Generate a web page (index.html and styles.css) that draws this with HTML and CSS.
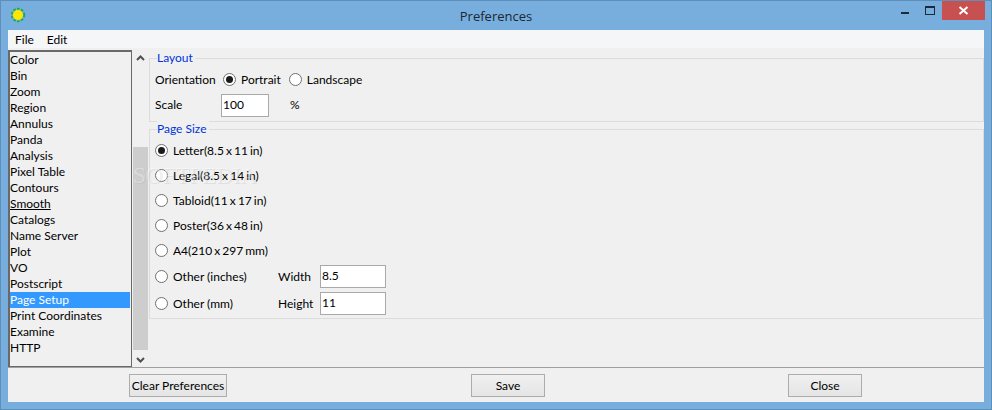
FILE: index.html
```html
<!DOCTYPE html>
<html lang="en">
<head>
<meta charset="utf-8">
<title>Preferences</title>
<link rel="stylesheet" href="styles.css">
</head>
<body>
<div class="window">
  <header class="titlebar">
    <svg class="app-icon" width="16" height="16" viewBox="0 0 16 16"><circle cx="8" cy="8" r="7.500" fill="#6fc09a"/><circle cx="8" cy="8" r="6.300" fill="none" stroke="#1f9a8a" stroke-width="1.800" stroke-dasharray="2.500 1.500"/><circle cx="8" cy="8" r="5" fill="#ffe600"/></svg>
    <div class="title">Preferences</div>
    <div class="controls">
      <div class="ctl"><span class="min"></span></div>
      <div class="ctl"><span class="max"></span></div>
      <div class="close"><svg width="11" height="9" viewBox="0 0 11 9"><path d="M1.500 1l8 7M9.500 1l-8 7" stroke="#fff" stroke-width="2" fill="none"/></svg></div>
    </div>
  </header>
  <div class="client">
    <nav class="menubar"><span>File</span><span>Edit</span></nav>
    <div class="main">
      <ul class="list">
        <li>Color</li><li>Bin</li><li>Zoom</li><li>Region</li><li>Annulus</li><li>Panda</li><li>Analysis</li><li>Pixel Table</li><li>Contours</li><li>Smooth</li><li>Catalogs</li><li>Name Server</li><li>Plot</li><li>VO</li><li>Postscript</li><li class="sel">Page Setup</li><li>Print Coordinates</li><li>Examine</li><li>HTTP</li>
      </ul>
      <div class="scrollbar">
        <svg width="9" height="6" viewBox="0 0 9 6"><path d="M1 5l3.500-3.500L8 5" stroke="#505050" stroke-width="2" fill="none"/></svg>
        <div class="track"><div class="thumb"></div></div>
        <svg width="9" height="6" viewBox="0 0 9 6"><path d="M1 1l3.500 3.500L8 1" stroke="#505050" stroke-width="2" fill="none"/></svg>
      </div>
      <div class="panel">
        <fieldset class="group layout">
          <legend>Layout</legend>
          <div class="row orient">
            <span class="lab-orient">Orientation</span>
            <span class="radio on"></span><span class="rlab">Portrait</span>
            <span class="radio"></span><span>Landscape</span>
          </div>
          <div class="row scale">
            <span class="lab-scale">Scale</span>
            <span class="input w48">100</span>
            <span class="pct">%</span>
          </div>
        </fieldset>
        <fieldset class="group size">
          <legend>Page Size</legend>
          <div class="row opt"><span class="radio on"></span><span>Letter(8.5 x 11 in)</span></div>
          <div class="row opt"><span class="radio"></span><span>Legal(8.5 x 14 in)</span></div>
          <div class="row opt"><span class="radio"></span><span>Tabloid(11 x 17 in)</span></div>
          <div class="row opt"><span class="radio"></span><span>Poster(36 x 48 in)</span></div>
          <div class="row opt"><span class="radio"></span><span>A4(210 x 297 mm)</span></div>
          <div class="row opt tall"><span class="radio"></span><span class="olab">Other (inches)</span><span class="dim">Width</span><span class="input w66">8.5</span></div>
          <div class="row opt tall"><span class="radio"></span><span class="olab">Other (mm)</span><span class="dim">Height</span><span class="input w66">11</span></div>
        </fieldset>
      </div>
      <div class="watermark">SOFTPEDIA</div>
    </div>
    <footer class="footer">
      <button class="btn wide">Clear Preferences</button>
      <button class="btn">Save</button>
      <button class="btn">Close</button>
    </footer>
  </div>
</div>
</body>
</html>
```
FILE: styles.css
```css
* { box-sizing: border-box; }
html, body { margin: 0; padding: 0; }
body {
  width: 992px; height: 410px; overflow: hidden;
  font: 12px/16px Lato, "Open Sans", sans-serif;
  color: #000;
}
.window {
  width: 992px; height: 410px;
  background: #78aedd;
  border: 1px solid #5f8fb8;
  padding: 0 7px 7px;
  display: flex; flex-direction: column;
}
.titlebar {
  height: 29px; flex: none;
  display: flex; align-items: center;
  position: relative;
}
.app-icon { margin: 0 0 1px 2px; }
.title {
  position: absolute; left: 0; right: 0; top: 6px;
  text-align: center; font: 13px/18px "Open Sans", sans-serif; color: #1b2733;
}
.controls { margin-left: auto; margin-right: -1px; height: 100%; display: flex; align-items: flex-start; }
.ctl { width: 25px; height: 19px; display: flex; justify-content: center; align-items: flex-start; }
.min { width: 8px; height: 2px; background: #1e2a36; margin-top: 11px; }
.max { width: 10px; height: 9px; border: 1px solid #1e2a36; border-top-width: 2px; margin-top: 5px; }
.close {
  width: 43px; height: 19px;
  background: #c75050;
  display: flex; align-items: center; justify-content: center;
}
.client {
  flex: 1; min-height: 0;
  background: #f0f0f0;
  display: flex; flex-direction: column;
}
.menubar {
  height: 18px; flex: none;
  background: #f5f6f7;
  padding-left: 7px;
  display: flex; gap: 13px;
  line-height: 19px;
}
.main {
  flex: none; height: 320px;
  display: flex; position: relative;
  border-bottom: 1px solid #a0a0a0;
  padding-top: 2px;
}
.list {
  list-style: none; margin: 0;
  width: 124px; height: 317px; flex: none;
  padding: 0 1px 0 0;
  border: 1px solid #696969; border-top-width: 2px; border-left-width: 2px;
  line-height: 16px; color: #000;
  background: #f0f0f0;
}
.list .sel { background: #3399ff; color: #fff; }
.list li:nth-child(10) { text-decoration: underline; text-decoration-thickness: 1px; }
.scrollbar {
  width: 17px; flex: none;
  padding-right: 1px;
  display: flex; flex-direction: column; align-items: center;
}
.scrollbar svg { flex: none; margin: 5px 0 0; }
.track { flex: none; width: 100%; height: 291px; padding-top: 86px; }
.thumb { width: 15px; margin-left: 1px; height: 203px; background: #cdcdcd; }
.panel { flex: 1; min-width: 0; display: flex; flex-direction: column; }
.group {
  margin: 0; padding: 0 0 0 5px;
  border: 1px solid #dcdcdc;
  min-width: 0;
}
.group legend {
  padding: 0 2px 0 0; margin-left: 2px;
  color: #0033dd; line-height: 16px;
  background: #f0f0f0;
}
.layout { height: 72px; }
.size { height: 198px; margin-top: -1px; }
.row { display: flex; align-items: center; }
.orient { height: 25px; margin-top: 1px; }
.lab-orient { width: 68px; }
.radio {
  width: 13px; height: 13px; flex: none;
  border: 1px solid #707070; border-radius: 50%;
  background: #fff; position: relative;
}
.radio.on::after {
  content: ""; position: absolute; left: 2px; top: 2px;
  width: 7px; height: 7px; border-radius: 50%; background: #1a1a1a;
}
.orient .radio { margin-right: 5px; }
.rlab { margin-right: 8px; }
.scale { height: 24px; margin-top: 1px; }
.lab-scale { width: 66px; }
.input {
  height: 23px; background: #fff;
  border: 1px solid #a9a9a9;
  padding: 0 1px; line-height: 19px;
  display: block; flex: none;
}
.w48 { width: 48px; }
.w66 { width: 66px; }
.pct { margin-left: 21px; }
.opt { height: 25px; word-spacing: -1px; }
.size .opt:first-of-type { margin-top: 1px; }
.opt .radio { margin-right: 5px; }
.tall { height: 27px; word-spacing: 0; }
.olab { width: 105px; }
.dim { width: 42px; }
.watermark {
  position: absolute; left: 125px; top: 116px;
  font: 23px/24px "Liberation Serif", serif;
  color: rgba(255,255,255,.35); text-shadow: 1px 1px 0 rgba(170,170,170,.25);
  pointer-events: none;
}
.footer {
  flex: 1; display: flex; align-items: center;
  padding: 1px 0 0 121px;
}
.btn {
  font: inherit; color: #000;
  width: 74px; height: 23px; padding: 0;
  background: linear-gradient(#f0f0f0, #e5e5e5);
  border: 1px solid #acacac;
  border-radius: 0; white-space: nowrap;
}
.btn.wide { width: 98px; margin-right: 244px; }
.btn:last-child { margin-left: 243px; }
```
